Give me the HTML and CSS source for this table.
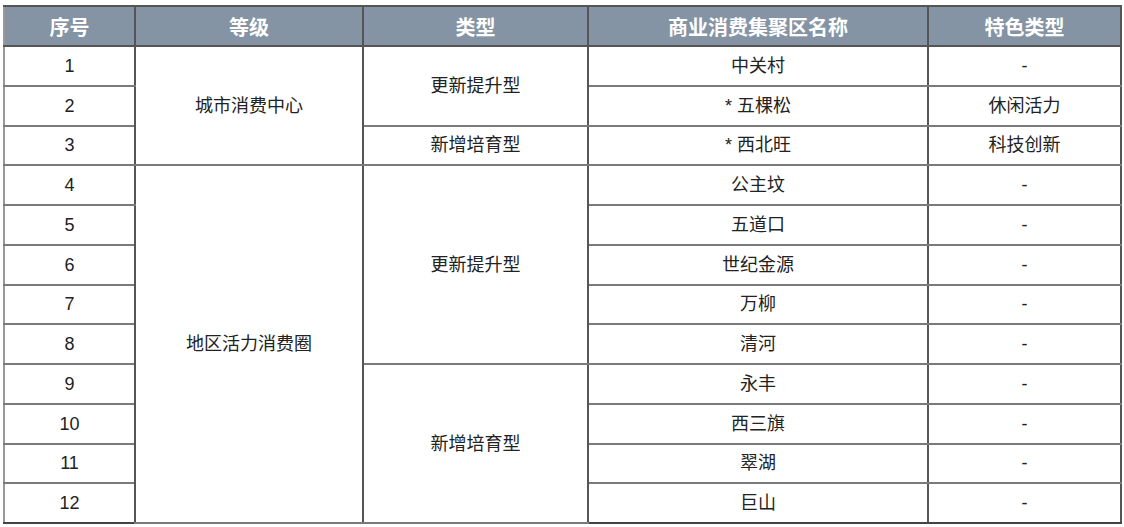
FILE: index.html
```html
<!DOCTYPE html>
<html lang="zh-CN">
<head>
<meta charset="utf-8">
<link rel="stylesheet" href="styles.css">
</head>
<body>
<table class="grid">
  <colgroup>
    <col class="c1"><col class="c2"><col class="c3"><col class="c4"><col class="c5">
  </colgroup>
  <thead>
    <tr><th>序号</th><th>等级</th><th>类型</th><th>商业消费集聚区名称</th><th>特色类型</th></tr>
  </thead>
  <tbody>
    <tr><td>1</td><td rowspan="3">城市消费中心</td><td rowspan="2">更新提升型</td><td>中关村</td><td>-</td></tr>
    <tr><td>2</td><td>* 五棵松</td><td>休闲活力</td></tr>
    <tr><td>3</td><td>新增培育型</td><td>* 西北旺</td><td>科技创新</td></tr>
    <tr><td>4</td><td rowspan="9">地区活力消费圈</td><td rowspan="5">更新提升型</td><td>公主坟</td><td>-</td></tr>
    <tr><td>5</td><td>五道口</td><td>-</td></tr>
    <tr><td>6</td><td>世纪金源</td><td>-</td></tr>
    <tr><td>7</td><td>万柳</td><td>-</td></tr>
    <tr><td>8</td><td>清河</td><td>-</td></tr>
    <tr><td>9</td><td rowspan="4">新增培育型</td><td>永丰</td><td>-</td></tr>
    <tr><td>10</td><td>西三旗</td><td>-</td></tr>
    <tr><td>11</td><td>翠湖</td><td>-</td></tr>
    <tr><td>12</td><td>巨山</td><td>-</td></tr>
  </tbody>
</table>
</body>
</html>
```
FILE: styles.css
```css
html, body {
  margin: 0;
  padding: 0;
  background: #ffffff;
}
body {
  padding: 5px 0 0 3px;
  font-family: "Liberation Sans", "Noto Sans CJK SC", sans-serif;
  color: #222;
}
.grid {
  border-collapse: collapse;
  table-layout: fixed;
  width: 1117px;
  font-size: 17px;
}
.c1 { width: 131px; }
.c2 { width: 228px; }
.c3 { width: 225px; }
.c4 { width: 340px; }
.c5 { width: 193px; }
.grid th {
  height: 38px;
  padding: 0;
  background: #8494a4;
  color: #ffffff;
  font-weight: bold;
  font-size: 20px;
  border: 2px solid #555;
  font-family: "Noto Sans CJK SC", sans-serif;
}
.grid td {
  height: 37.75px;
  padding: 0;
  text-align: center;
  line-height: 1;
  border-top: 2px solid #7a7a7a;
  border-bottom: 2px solid #7a7a7a;
  border-left: 2px solid #555;
  border-right: 2px solid #555;
}
.grid td:lang(zh-CN) {
  font-size: 18px;
}
.grid tbody tr:last-child td {
  border-bottom-color: #444;
}
.grid tr > :first-child {
  border-left-color: #999;
}
```
